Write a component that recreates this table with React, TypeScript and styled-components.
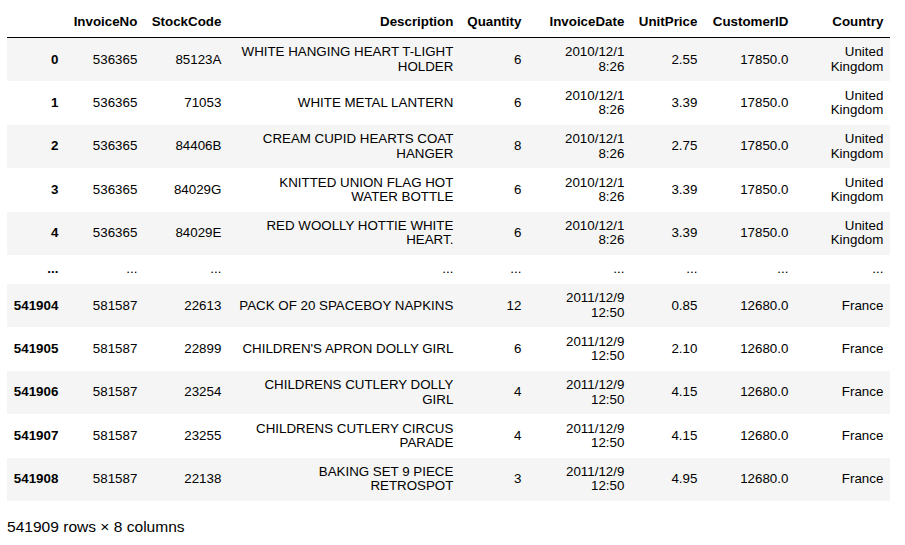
import React from "react";
import styled, { createGlobalStyle } from "styled-components";

const GlobalStyle = createGlobalStyle`
  body {
    margin: 0;
    background: #fff;
    font-family: "Liberation Sans", Arial, sans-serif;
    color: #000;
  }
`;

const Page = styled.div`
  padding: 8px 7px;
`;

const Table = styled.table`
  width: 883px;
  table-layout: fixed;
  border-collapse: collapse;
  border-spacing: 0;
  font-size: 13.33px;
  line-height: 14.4px;
`;

const Col = styled.col<{ $w: number }>`
  width: ${(p) => p.$w}px;
`;

const HeadRow = styled.tr`
  border-bottom: 1px solid #000;
`;

const HeadCell = styled.th`
  padding: 7.3px 6.67px;
  text-align: right;
  font-weight: bold;
  white-space: nowrap;
  vertical-align: middle;
`;

const BodyRow = styled.tr`
  &:nth-child(odd) {
    background: #f5f5f5;
  }
`;

const IndexCell = styled.th`
  padding: 7.3px 6.67px;
  text-align: right;
  font-weight: bold;
  white-space: nowrap;
  vertical-align: middle;
`;

const Cell = styled.td`
  padding: 7.3px 6.67px;
  text-align: right;
  vertical-align: middle;
  white-space: pre-line;
`;

const Footer = styled.p`
  margin: 17px 0 0;
  font-size: 15.56px;
  line-height: 18px;
`;

const columns = [
  { name: "", w: 58 },
  { name: "InvoiceNo", w: 79 },
  { name: "StockCode", w: 84 },
  { name: "Description", w: 232 },
  { name: "Quantity", w: 68 },
  { name: "InvoiceDate", w: 103 },
  { name: "UnitPrice", w: 73 },
  { name: "CustomerID", w: 91 },
  { name: "Country", w: 95 },
];

type Row = [string, string, string, string, string, string, string, string, string];

const d1 = "2010/12/1\n8:26";
const d2 = "2011/12/9\n12:50";
const uk = "United Kingdom";

const rows: Row[] = [
  ["0", "536365", "85123A", "WHITE HANGING HEART T-LIGHT HOLDER", "6", d1, "2.55", "17850.0", uk],
  ["1", "536365", "71053", "WHITE METAL LANTERN", "6", d1, "3.39", "17850.0", uk],
  ["2", "536365", "84406B", "CREAM CUPID HEARTS COAT HANGER", "8", d1, "2.75", "17850.0", uk],
  ["3", "536365", "84029G", "KNITTED UNION FLAG HOT WATER BOTTLE", "6", d1, "3.39", "17850.0", uk],
  ["4", "536365", "84029E", "RED WOOLLY HOTTIE WHITE HEART.", "6", d1, "3.39", "17850.0", uk],
  ["...", "...", "...", "...", "...", "...", "...", "...", "..."],
  ["541904", "581587", "22613", "PACK OF 20 SPACEBOY NAPKINS", "12", d2, "0.85", "12680.0", "France"],
  ["541905", "581587", "22899", "CHILDREN'S APRON DOLLY GIRL", "6", d2, "2.10", "12680.0", "France"],
  ["541906", "581587", "23254", "CHILDRENS CUTLERY DOLLY GIRL", "4", d2, "4.15", "12680.0", "France"],
  ["541907", "581587", "23255", "CHILDRENS CUTLERY CIRCUS PARADE", "4", d2, "4.15", "12680.0", "France"],
  ["541908", "581587", "22138", "BAKING SET 9 PIECE RETROSPOT", "3", d2, "4.95", "12680.0", "France"],
];

const App: React.FC = () => {
  return (
    <Page>
      <GlobalStyle />
      <Table>
        <colgroup>
          {columns.map((c, i) => (
            <Col key={i} $w={c.w} />
          ))}
        </colgroup>
        <thead>
          <HeadRow>
            {columns.map((c, i) => (
              <HeadCell key={i}>{c.name}</HeadCell>
            ))}
          </HeadRow>
        </thead>
        <tbody>
          {rows.map((r) => (
            <BodyRow key={r[0]}>
              <IndexCell>{r[0]}</IndexCell>
              {r.slice(1).map((v, j) => (
                <Cell key={j}>{v}</Cell>
              ))}
            </BodyRow>
          ))}
        </tbody>
      </Table>
      <Footer>541909 rows × 8 columns</Footer>
    </Page>
  );
};

export default App;
